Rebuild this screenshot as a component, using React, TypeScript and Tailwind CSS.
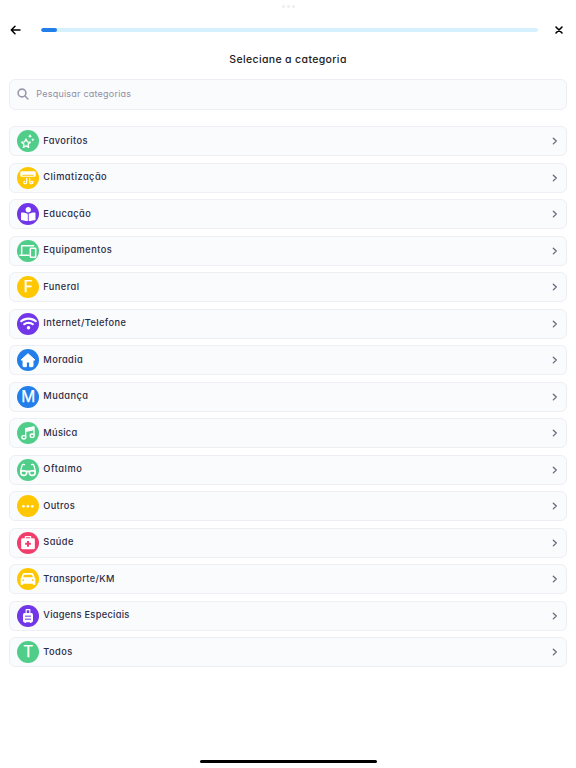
import type { ReactNode } from "react";
import { FaBookReader, FaGlasses, FaWifi } from "react-icons/fa";

type Category = {
  name: string;
  color: string;
  tracking: string;
  icon: ReactNode;
};

const GREEN = "bg-[#4fcd89]";
const YELLOW = "bg-[#ffc700]";
const PURPLE = "bg-[#7036e8]";
const BLUE = "bg-[#217eea]";
const PINK = "bg-[#f13d6b]";

// All the drawn glyphs share one 66-unit canvas that fills the 22px badge
function Glyph({ children }: { children: ReactNode }) {
  return (
    <svg viewBox="0 0 66 66" className="size-[22px]" fill="none" stroke="none">
      {children}
    </svg>
  );
}

function Letter({ children }: { children: string }) {
  return <span className="text-[15.5px] leading-none font-normal [-webkit-text-stroke:0.25px_white]">{children}</span>;
}

const categories: Category[] = [
  {
    name: "Favoritos",
    color: GREEN,
    tracking: "tracking-[0.36px]",
    icon: (
      <Glyph>
        <path
          d="M27 27l4 8.500 9 1-6.700 6.300 1.800 9.200-8.100-4.600-8.100 4.600 1.800-9.200-6.700-6.300 9-1z"
          stroke="white"
          strokeWidth="4"
          strokeLinejoin="round"
        />
        <path
          d="M39 12l2 4.400 4.400 2-4.400 2L39 25l-2-4.600-4.400-2 4.400-2zM47.500 24l1.700 3.600 3.600 1.700-3.600 1.700-1.700 3.600-1.700-3.600-3.600-1.700 3.600-1.700z"
          fill="white"
        />
      </Glyph>
    ),
  },
  {
    name: "Climatização",
    color: YELLOW,
    tracking: "tracking-[0.47px]",
    icon: (
      <Glyph>
        <path
          fillRule="evenodd"
          d="M13 13h40a3 3 0 0 1 3 3v10a3 3 0 0 1-3 3H13a3 3 0 0 1-3-3V16a3 3 0 0 1 3-3zM16 23v3h34v-3z"
          fill="white"
        />
        <path
          d="M29 34v12c0 6-9 6-9 0q0-3 3-3M38 34v12c0 6 10 6 10 0 0-4-5-4-6-1"
          stroke="white"
          strokeWidth="3.600"
          strokeLinecap="round"
        />
      </Glyph>
    ),
  },
  {
    name: "Educação",
    color: PURPLE,
    tracking: "tracking-[0.42px]",
    icon: <FaBookReader className="size-[14.5px]" />,
  },
  {
    name: "Equipamentos",
    color: GREEN,
    tracking: "tracking-[0.45px]",
    icon: (
      <Glyph>
        <path d="M14 41V17h36M9 46h27" stroke="white" strokeWidth="4.500" strokeLinecap="round" strokeLinejoin="round" />
        <rect x="40" y="25" width="16" height="27" rx="1.500" stroke="white" strokeWidth="4.500" />
      </Glyph>
    ),
  },
  { name: "Funeral", color: YELLOW, tracking: "tracking-[0.42px]", icon: <Letter>F</Letter> },
  {
    name: "Internet/Telefone",
    color: PURPLE,
    tracking: "tracking-[0.4px]",
    icon: <FaWifi className="size-[17px]" />,
  },
  {
    name: "Moradia",
    color: BLUE,
    tracking: "tracking-[0.42px]",
    icon: (
      <Glyph>
        <path
          d="M33 14L12 33h6v18a2 2 0 0 0 2 2h8V39h10v14h8a2 2 0 0 0 2-2V33h6z"
          fill="white"
          stroke="white"
          strokeWidth="3"
          strokeLinejoin="round"
        />
      </Glyph>
    ),
  },
  { name: "Mudança", color: BLUE, tracking: "tracking-[0.45px]", icon: <Letter>M</Letter> },
  {
    name: "Música",
    color: GREEN,
    tracking: "tracking-[0.3px]",
    icon: (
      <Glyph>
        <path d="M26 45V20l25-5v25M26 28l25-5" stroke="white" strokeWidth="4" strokeLinejoin="round" />
        <path d="M26 19l25-5v8l-25 5z" fill="white" />
        <ellipse cx="20.500" cy="46" rx="6" ry="5" stroke="white" strokeWidth="4" />
        <ellipse cx="45.500" cy="41" rx="6" ry="5" stroke="white" strokeWidth="4" />
      </Glyph>
    ),
  },
  {
    name: "Oftalmo",
    color: GREEN,
    tracking: "tracking-[0.55px]",
    icon: <FaGlasses className="size-[16px]" />,
  },
  {
    name: "Outros",
    color: YELLOW,
    tracking: "tracking-[0.33px]",
    icon: (
      <Glyph>
        <g fill="white">
          <circle cx="19.500" cy="34" r="4" />
          <circle cx="32.500" cy="34" r="4" />
          <circle cx="45.500" cy="34" r="4" />
        </g>
      </Glyph>
    ),
  },
  {
    name: "Saúde",
    color: PINK,
    tracking: "tracking-[0.42px]",
    icon: (
      <Glyph>
        <rect x="12.500" y="19" width="41" height="33" rx="4" fill="white" />
        <path d="M25 20v-6h16v6" stroke="white" strokeWidth="3.600" strokeLinejoin="round" />
        <path d="M33 27v17M24.500 35.500h17" stroke="#f13d6b" strokeWidth="6" />
      </Glyph>
    ),
  },
  {
    name: "Transporte/KM",
    color: YELLOW,
    tracking: "tracking-[0.35px]",
    icon: (
      <Glyph>
        <path
          fillRule="evenodd"
          d="M22 15h22c3 0 4.500 1.500 5.500 4l3.500 9c1.500 1.500 2 4 2 6v13a4 4 0 0 1-8 0H19a4 4 0 0 1-8 0V34c0-2 .5-4.500 2-6l3.500-9c1-2.500 2.500-4 5.500-4zM23 20c-1 0-1.700.5-2 1.500L18.500 28h29L45 21.500c-.3-1-1-1.500-2-1.500zM19 34a2.500 2.500 0 1 0 0 5 2.500 2.500 0 0 0 0-5zM47 34a2.500 2.500 0 1 0 0 5 2.500 2.500 0 0 0 0-5z"
          fill="white"
        />
      </Glyph>
    ),
  },
  {
    name: "Viagens Especiais",
    color: PURPLE,
    tracking: "tracking-[0.3px]",
    icon: (
      <Glyph>
        <path d="M27.500 25V14h11v11" stroke="white" strokeWidth="3.500" strokeLinejoin="round" />
        <rect x="18" y="24" width="30" height="28" rx="5" fill="white" />
        <path d="M25 50v4M41 50v4" stroke="white" strokeWidth="4.500" />
        <path d="M24 33.500h18M24 42.500h18" stroke="#7036e8" strokeWidth="3" />
      </Glyph>
    ),
  },
  { name: "Todos", color: GREEN, tracking: "tracking-[0.42px]", icon: <Letter>T</Letter> },
];

function CategoryRow({ name, color, tracking, icon }: Category) {
  return (
    <button
      type="button"
      className="flex h-[30px] w-full items-center rounded-[6px] border border-[#eeeff5] bg-[#fafbfd] pr-[6px] pl-[7px] text-left"
    >
      <span className={`flex size-[22px] shrink-0 items-center justify-center rounded-full text-white ${color}`}>
        {icon}
      </span>
      <span className={`-mt-[2px] ml-[4px] flex-1 text-[9.25px] leading-none font-medium text-[#2b2b46] ${tracking}`}>
        {name}
      </span>
      <svg viewBox="0 0 10 10" className="size-[10px]" fill="none" stroke="#68687f" strokeWidth="1.300">
        <path d="M3.300 2.200L6.300 5 3.300 7.900" strokeLinecap="round" strokeLinejoin="round" />
      </svg>
    </button>
  );
}

export default function App() {
  return (
    <div className="flex h-screen flex-col bg-white px-[9.3px] font-['Inter','Open_Sans',sans-serif] [font-feature-settings:'cv11']">
      <div className="flex h-[10px] items-end justify-center gap-[2px] pb-[2px]">
        <span className="size-[3px] rounded-full bg-[#eeeeee]" />
        <span className="size-[3px] rounded-full bg-[#eeeeee]" />
        <span className="size-[3px] rounded-full bg-[#eeeeee]" />
      </div>

      <header className="mt-[12.7px] flex h-[14px] items-center">
        <button type="button" aria-label="Voltar" className="w-[31.5px] shrink-0">
          <svg viewBox="0 0 14 14" className="size-[14px]" fill="none" stroke="black" strokeWidth="1.500">
            <path d="M11 7H2.500M6 3.300L2.300 7 6 10.700" strokeLinecap="round" strokeLinejoin="round" />
          </svg>
        </button>
        <div className="h-1 flex-1 overflow-hidden rounded-full bg-[#d5f0ff]">
          <div className="h-full w-4 rounded-full bg-[#217eea]" />
        </div>
        <button type="button" aria-label="Fechar" className="flex w-[28.7px] shrink-0 justify-end">
          <svg viewBox="0 0 14 14" className="size-[14px]" fill="none" stroke="black" strokeWidth="1.600">
            <path d="M3 4l6 6M9 4l-6 6" strokeLinecap="round" />
          </svg>
        </button>
      </header>

      <h1 className="mt-[17px] text-center text-[10.5px] leading-[12px] font-medium tracking-[0.36px] text-[#1c1c1e]">
        Seleciane a categoria
      </h1>

      <label className="mt-[13.5px] flex h-[30.5px] items-center rounded-[6px] border border-[#eeeff5] bg-[#fafbfd] pl-[7px]">
        <svg viewBox="0 0 12 12" className="size-[12px]" fill="none" stroke="#9698ad">
          <circle cx="5" cy="5" r="3.900" strokeWidth="1.600" />
          <path d="M8 8l3 3" strokeWidth="1.500" strokeLinecap="round" />
        </svg>
        <input
          type="text"
          placeholder="Pesquisar categorias"
          className="-mt-[1px] ml-[7px] flex-1 bg-transparent text-[9px] tracking-[0.22px] outline-none placeholder:text-[#8e8ea6]"
        />
      </label>

      <div className="mt-[16.5px] flex flex-col gap-[6.5px]">
        {categories.map((category) => (
          <CategoryRow key={category.name} {...category} />
        ))}
      </div>

      <div className="mt-auto mb-[5px] h-[3px] w-[177px] self-center rounded-full bg-black" />
    </div>
  );
}
